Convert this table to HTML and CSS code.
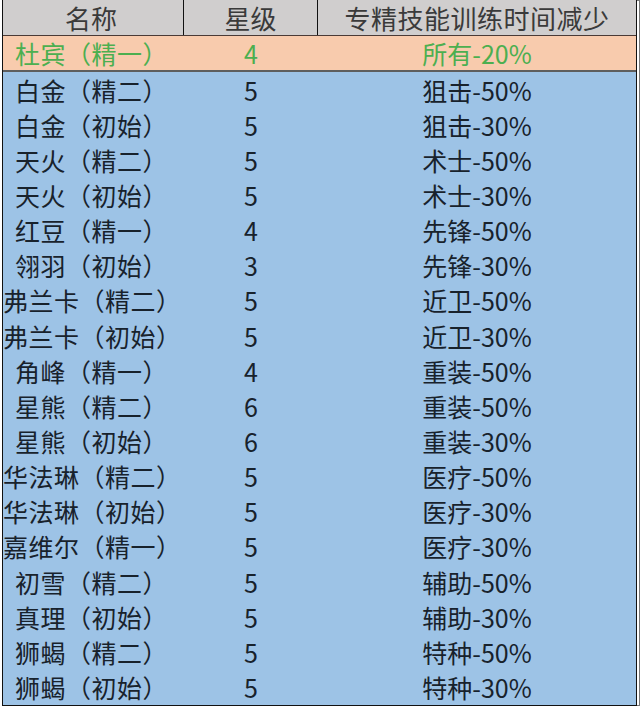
FILE: index.html
```html
<!DOCTYPE html>
<html lang="zh">
<head>
<meta charset="utf-8">
<title>专精技能训练时间减少</title>
<link rel="stylesheet" href="styles.css">
</head>
<body>
<div class="sheet">
  <div class="row head">
    <div class="cell c1">名称</div>
    <div class="cell c2">星级</div>
    <div class="cell c3">专精技能训练时间减少</div>
  </div>
  <div class="row hl">
    <div class="cell c1">杜宾（精一）</div>
    <div class="cell c2">4</div>
    <div class="cell c3">所有-20%</div>
  </div>
  <div class="body">
    <div class="row"><div class="cell c1">白金（精二）</div><div class="cell c2">5</div><div class="cell c3">狙击-50%</div></div>
    <div class="row"><div class="cell c1">白金（初始）</div><div class="cell c2">5</div><div class="cell c3">狙击-30%</div></div>
    <div class="row"><div class="cell c1">天火（精二）</div><div class="cell c2">5</div><div class="cell c3">术士-50%</div></div>
    <div class="row"><div class="cell c1">天火（初始）</div><div class="cell c2">5</div><div class="cell c3">术士-30%</div></div>
    <div class="row"><div class="cell c1">红豆（精一）</div><div class="cell c2">4</div><div class="cell c3">先锋-50%</div></div>
    <div class="row"><div class="cell c1">翎羽（初始）</div><div class="cell c2">3</div><div class="cell c3">先锋-30%</div></div>
    <div class="row"><div class="cell c1">弗兰卡（精二）</div><div class="cell c2">5</div><div class="cell c3">近卫-50%</div></div>
    <div class="row"><div class="cell c1">弗兰卡（初始）</div><div class="cell c2">5</div><div class="cell c3">近卫-30%</div></div>
    <div class="row"><div class="cell c1">角峰（精一）</div><div class="cell c2">4</div><div class="cell c3">重装-50%</div></div>
    <div class="row"><div class="cell c1">星熊（精二）</div><div class="cell c2">6</div><div class="cell c3">重装-50%</div></div>
    <div class="row"><div class="cell c1">星熊（初始）</div><div class="cell c2">6</div><div class="cell c3">重装-30%</div></div>
    <div class="row"><div class="cell c1">华法琳（精二）</div><div class="cell c2">5</div><div class="cell c3">医疗-50%</div></div>
    <div class="row"><div class="cell c1">华法琳（初始）</div><div class="cell c2">5</div><div class="cell c3">医疗-30%</div></div>
    <div class="row"><div class="cell c1">嘉维尔（精一）</div><div class="cell c2">5</div><div class="cell c3">医疗-30%</div></div>
    <div class="row"><div class="cell c1">初雪（精二）</div><div class="cell c2">5</div><div class="cell c3">辅助-50%</div></div>
    <div class="row"><div class="cell c1">真理（初始）</div><div class="cell c2">5</div><div class="cell c3">辅助-30%</div></div>
    <div class="row"><div class="cell c1">狮蝎（精二）</div><div class="cell c2">5</div><div class="cell c3">特种-50%</div></div>
    <div class="row"><div class="cell c1">狮蝎（初始）</div><div class="cell c2">5</div><div class="cell c3">特种-30%</div></div>
  </div>
</div>
</body>
</html>
```
FILE: styles.css
```css
html, body {
  margin: 0;
  padding: 0;
  background: #ffffff;
}
body {
  font-family: "Noto Sans CJK SC", "Noto Sans", sans-serif;
  color: #18222c;
}
.sheet {
  margin-left: 2px;
  width: 633px;
  border-left: 1px solid #111;
  border-right: 1px solid #111;
  border-bottom: 1px solid #111;
  box-shadow: 3px 0 0 -1px #fff, 3px 0 0 0 #777;
}
.row {
  display: grid;
  grid-template-columns: 181px 134px 1fr;
  align-items: center;
}
.cell {
  text-align: center;
  white-space: nowrap;
  font-size: 25px;
  line-height: 1.2;
}
.head {
  height: 35px;
  background: #d0cece;
  border-bottom: 1px solid #4a3a36;
  align-items: stretch;
  color: #3a3a3a;
}
.head .cell {
  font-size: 26px;
  line-height: 1.2;
  display: flex;
  align-items: center;
  justify-content: center;
}
.head .c3 {
  letter-spacing: 0.5px;
}
.head .c1, .head .c2 {
  border-right: 1px solid #111;
}
.hl {
  height: 34px;
  background: #f8cbad;
  color: #4caf50;
  border-bottom: 2px solid #5e5e5e;
}
.body {
  background: #9dc3e6;
  display: grid;
  grid-auto-rows: 35.15px;
}
.body .row {
  height: 100%;
}
.c1 {
  padding-right: 4px;
}
.body .c1, .hl .c1 {
  letter-spacing: 0.5px;
}
```
